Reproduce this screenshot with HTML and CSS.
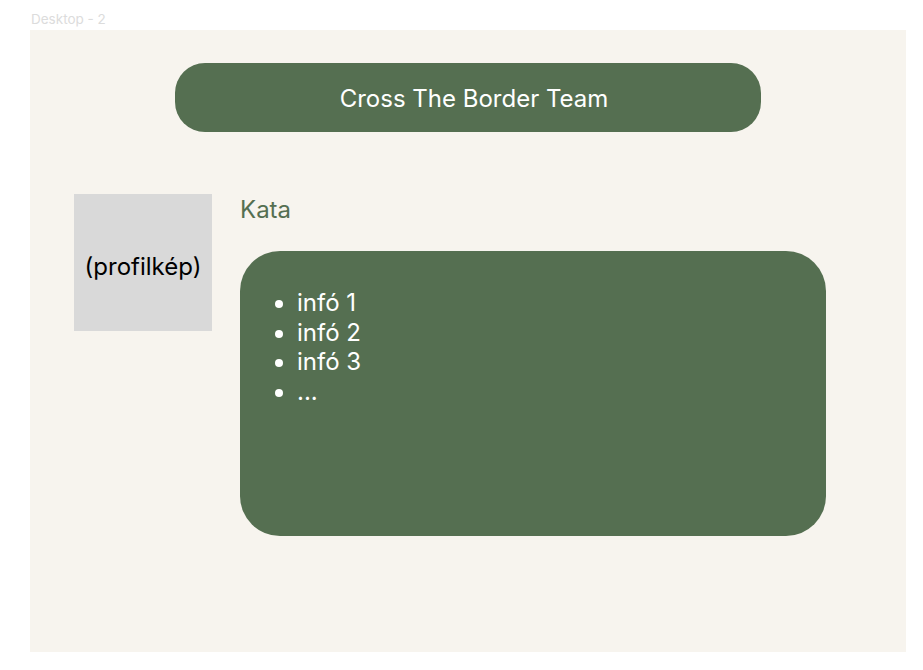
FILE: index.html
```html
<!DOCTYPE html>
<html lang="hu">
<head>
<meta charset="utf-8">
<title>Desktop - 2</title>
<link rel="stylesheet" href="styles.css">
</head>
<body>
<div class="label">Desktop - 2</div>
<main class="frame">
  <header class="banner">Cross The Border Team</header>
  <section class="member">
    <div class="photo">(profilkép)</div>
    <div class="details">
      <h2 class="name">Kata</h2>
      <div class="card">
        <ul class="info">
          <li>infó 1</li>
          <li>infó 2</li>
          <li>infó 3</li>
          <li>...</li>
        </ul>
      </div>
    </div>
  </section>
</main>
</body>
</html>
```
FILE: styles.css
```css
html, body {
  margin: 0;
  padding: 0;
  background: #ffffff;
  font-family: Inter, "Noto Sans", sans-serif;
}
.label {
  height: 30px;
  box-sizing: border-box;
  padding: 11px 0 0 31px;
  font-size: 13.5px;
  line-height: 16px;
  color: #dcdcdc;
}
.frame {
  margin-left: 30px;
  width: 876px;
  height: 622px;
  background: #f7f4ee;
  box-sizing: border-box;
  padding-top: 33px;
  display: flex;
  flex-direction: column;
}
.banner {
  margin-left: 145px;
  width: 586px;
  height: 69px;
  border-radius: 30px;
  background: #556f51;
  color: #ffffff;
  font-size: 24px;
  padding: 2px 0 0 12px;
  box-sizing: border-box;
  display: flex;
  align-items: center;
  justify-content: center;
}
.member {
  display: flex;
  margin-top: 62px;
  margin-left: 44px;
  gap: 28px;
}
.photo {
  width: 138px;
  height: 137px;
  background: #d9d9d9;
  color: #000000;
  font-size: 24px;
  box-sizing: border-box;
  padding-top: 8px;
  display: flex;
  align-items: center;
  justify-content: center;
}
.details {
  display: flex;
  flex-direction: column;
}
.name {
  margin: 1px 0 0 0;
  font-size: 24px;
  font-weight: 400;
  line-height: 29px;
  color: #556f51;
}
.card {
  margin-top: 27px;
  width: 586px;
  height: 285px;
  border-radius: 40px;
  background: #556f51;
  box-sizing: border-box;
  padding-top: 37px;
}
.info {
  margin: 0;
  padding-left: 57px;
  color: #ffffff;
  font-size: 24px;
  line-height: 29.6px;
}
```
